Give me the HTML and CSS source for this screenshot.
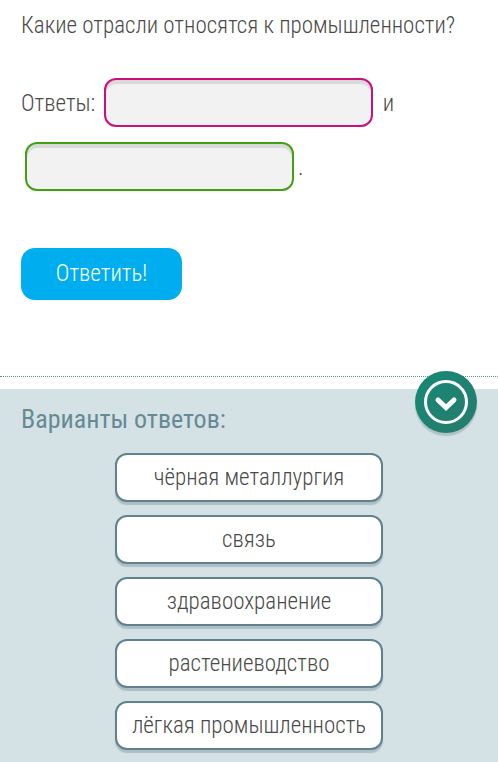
FILE: index.html
```
<!DOCTYPE html>
<html lang="ru">
<head>
  <meta charset="UTF-8">
  <meta name="viewport" content="width=device-width, initial-scale=1.0">
  <title>Отрасли промышленности</title>
  <link rel="stylesheet" href="styles.css">
</head>
<body>
  <main class="task">
    <p class="question">Какие отрасли относятся к промышленности?</p>
    <form class="answer-form">
      <p class="answers">
        <label for="answer1">Ответы:</label>
        <input class="gap gap-pink" id="answer1" type="text">
        и
        <input class="gap gap-green" type="text" aria-label="Второй ответ">.
      </p>
      <button class="submit" type="button">Ответить!</button>
    </form>
  </main>

  <section class="variants">
    <button class="toggle" type="button" aria-label="Свернуть">
      <svg class="toggle-icon" viewBox="0 0 62 62" aria-hidden="true">
        <circle cx="31" cy="31" r="20.5" fill="none" stroke="#fff" stroke-width="3"/>
        <path d="M23 29 L31 36.5 L39 29" fill="none" stroke="#fff" stroke-width="5" stroke-linecap="round" stroke-linejoin="miter"/>
      </svg>
    </button>
    <h2 class="variants-title">Варианты ответов:</h2>
    <div class="variants-list">
      <button class="variant" type="button">чёрная металлургия</button>
      <button class="variant" type="button">связь</button>
      <button class="variant" type="button">здравоохранение</button>
      <button class="variant" type="button">растениеводство</button>
      <button class="variant" type="button">лёгкая промышленность</button>
    </div>
  </section>
</body>
</html>
```
FILE: styles.css
```
* {
  box-sizing: border-box;
}
html {
  background: #d4e2e6;
}
body {
  margin: 0;
  font-family: "Roboto Condensed", "Liberation Sans Narrow", "Roboto", sans-serif;
  font-weight: 300;
  font-size: 23px;
  color: #4a4a48;
}
button, input {
  font: inherit;
  color: inherit;
}
.task {
  padding: 9px 21px 76px;
  background: #fff;
}
.question {
  margin: 0 0 29px;
  line-height: 34px;
}
.answers {
  margin: 0 0 48px;
  line-height: 64px;
}
.gap {
  width: 269px;
  height: 49px;
  margin: 0 4px 4px;
  padding: 0 12px;
  vertical-align: middle;
  border: 2px solid;
  border-radius: 12px;
  background: #f2f2f2;
  box-shadow: inset 0 4px 1px #d9d9d9;
}
.gap-pink {
  border-color: #c9107c;
}
.gap-green {
  border-color: #44a013;
}
.submit {
  min-width: 161px;
  height: 52px;
  padding: 0 32px 2px;
  border: 0;
  border-radius: 14px;
  background: #00aeef;
  color: #fff;
}
.variants {
  position: relative;
  padding: 12px 21px 12px;
  border-top: 13px solid #fff;
  background: #d4e2e6;
}
.variants::before {
  content: "";
  position: absolute;
  top: -13px;
  left: 0;
  right: 0;
  border-top: 1px dotted #4f9a96;
}
.toggle {
  position: absolute;
  top: -18px;
  right: 21px;
  width: 62px;
  height: 62px;
  padding: 0;
  border: 0;
  border-radius: 50%;
  background: linear-gradient(135deg, #148a76, #297a6c);
  box-shadow: 0 3px 1px #b0c2c6;
}
.toggle-icon {
  display: block;
}
.variants-title {
  margin: 0 0 16px;
  font-size: 26px;
  font-weight: 400;
  line-height: 36px;
  color: #668a94;
}
.variants-list {
  display: flex;
  flex-direction: column;
  align-items: center;
  gap: 13px;
}
.variant {
  min-width: 268px;
  height: 49px;
  padding: 0 12px;
  border: 2px solid #5f828c;
  border-radius: 12px;
  background: #fff;
  box-shadow: 0 3px 1px #adbfc5;
}
```
